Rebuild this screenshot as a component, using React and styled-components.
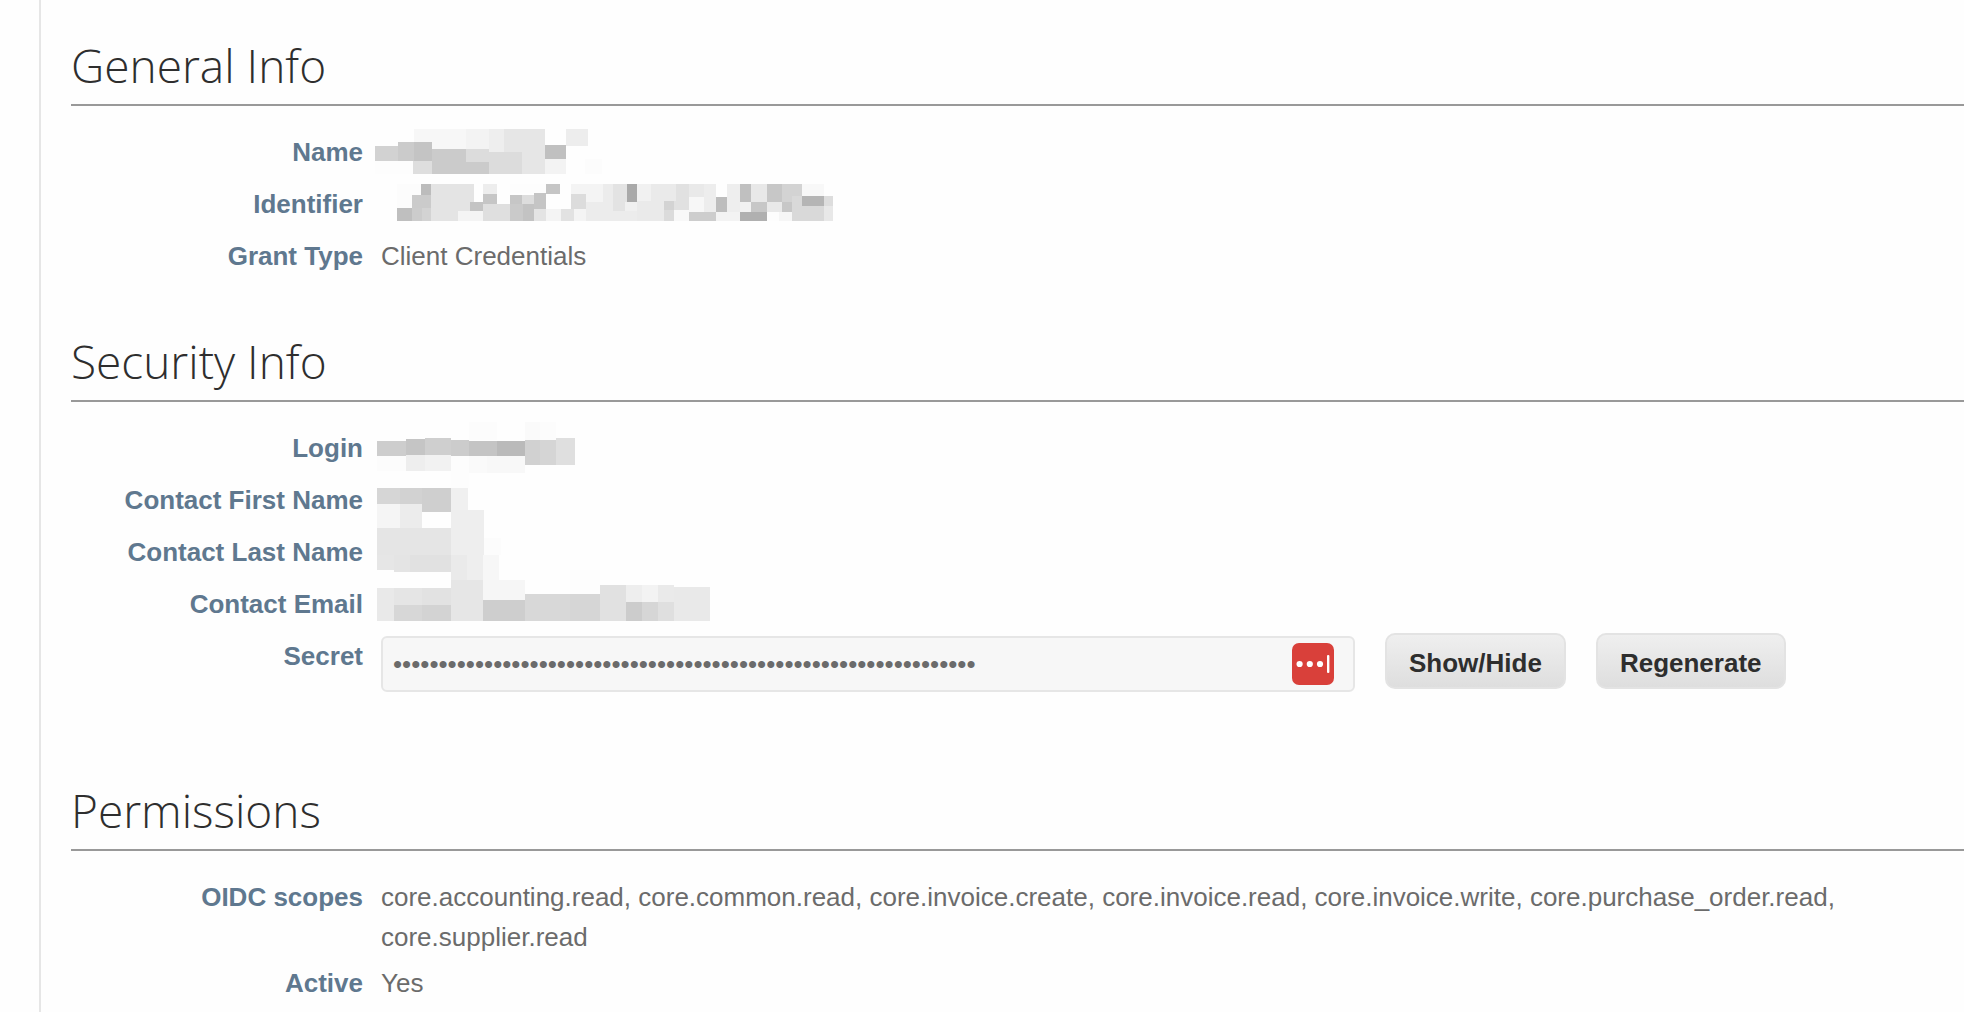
import React, { useState } from 'react';
import styled, { createGlobalStyle } from 'styled-components';

const GlobalStyle = createGlobalStyle`
  body {
    margin: 0;
    background: #fefefe;
    font-family: 'Liberation Sans', Arial, sans-serif;
    font-size: 26px;
    line-height: 40px;
    color: #6b6b6b;
  }
`;

const Page = styled.main`
  box-sizing: border-box;
  min-height: 100vh;
  margin-left: 39px;
  padding: 33px 0 0 30px;
  border-left: 2px solid #e6e6e6;
  overflow: hidden;
`;

const Section = styled.section`
  & + & {
    margin-top: 41px;
  }
`;

const Title = styled.h2`
  margin: 0 0 26px;
  padding-bottom: 7px;
  border-bottom: 2px solid #999;
  font-family: 'Open Sans', sans-serif;
  font-size: 46px;
  font-weight: 300;
  line-height: 64px;
  color: #2e2e2e;
`;

const List = styled.dl`
  margin: 0;
`;

const Row = styled.div`
  display: grid;
  grid-template-columns: 292px 1fr;
  column-gap: 18px;
  padding-bottom: ${({ $last }) => ($last ? '45px' : '6px')};
`;

const Label = styled.dt`
  min-height: 46px;
  font-weight: bold;
  text-align: right;
  color: #5f788f;
`;

const Value = styled.dd`
  margin: 0;
  min-width: 0;
`;

const Mask = styled.svg`
  display: block;
  overflow: visible;
`;

const SecretBar = styled.div`
  display: flex;
  align-items: flex-start;
  gap: 30px;
`;

const SecretBox = styled.div`
  position: relative;
  flex: 0 1 974px;
`;

const SecretInput = styled.input`
  display: block;
  box-sizing: border-box;
  width: 100%;
  height: 56px;
  padding: 0 70px 0 10px;
  border: 2px solid #e6e6e6;
  border-radius: 6px;
  background: #f7f7f7;
  font: inherit;
  color: #6b6b6b;
  outline: none;
`;

const FillButton = styled.button`
  position: absolute;
  top: 7px;
  right: 21px;
  width: 42px;
  height: 42px;
  padding: 0;
  border: 0;
  border-radius: 7px;
  background: #d9403a;
  cursor: pointer;

  svg {
    display: block;
  }
`;

const Button = styled.button`
  flex: none;
  height: 56px;
  margin-top: -3px;
  padding: 4px 22px 0;
  border: 2px solid #e3e3e3;
  border-radius: 10px;
  background: linear-gradient(#efefef, #dedede);
  font: inherit;
  font-weight: bold;
  color: #2e2e2e;
  cursor: pointer;
`;

// x, y, width, height, grey level
const nameBlocks = [
  [33, -3, 52, 20, 'f7'], [85, -3, 23, 20, 'f3'], [108, -3, 15, 23, 'ee'], [123, -3, 41, 45, 'e6'],
  [-6, 14, 23, 15, 'd2'], [17, 10, 16, 19, 'cb'], [33, 10, 18, 19, 'c4'], [-6, 29, 38, 13, 'fd'],
  [32, 29, 19, 13, 'de'], [51, 17, 57, 25, 'cb'], [85, 17, 23, 13, 'dc'], [108, 20, 33, 22, 'dc'],
  [164, 13, 21, 14, 'c0'], [164, 27, 21, 15, 'f3'], [185, -3, 22, 17, 'ed'], [204, 27, 17, 15, 'fc'],
];

const identifierBlocks = [
  [16, 0, 24, 24, 'fc'], [40, 0, 10, 11, 'bc'], [31, 11, 19, 13, 'cb'], [16, 24, 15, 13, 'bf'],
  [31, 24, 10, 13, 'cc'], [41, 24, 9, 13, 'd3'], [50, 0, 43, 27, 'e4'], [50, 27, 27, 10, 'e4'],
  [77, 27, 25, 10, 'f4'], [89, 18, 13, 9, 'c4'], [102, 0, 14, 10, 'ed'], [102, 10, 14, 10, 'c6'],
  [102, 20, 27, 17, 'df'], [129, 0, 36, 9, 'fd'], [129, 11, 12, 9, 'c6'], [141, 11, 12, 9, 'dd'],
  [129, 20, 13, 17, 'ca'], [142, 20, 11, 17, 'c3'], [153, 9, 12, 16, 'c5'], [153, 25, 12, 12, 'e4'],
  [165, 0, 14, 10, 'c5'], [165, 25, 15, 12, 'f4'], [180, 25, 13, 12, 'e2'], [193, 25, 12, 12, 'f4'],
  [190, 0, 32, 18, 'f4'], [190, 10, 15, 15, 'dc'], [205, 18, 34, 19, 'ec'], [222, 0, 10, 18, 'ec'],
  [232, 0, 14, 27, 'e3'], [246, 0, 10, 18, 'a9'], [256, 0, 14, 17, 'f1'], [244, 18, 12, 9, 'f0'],
  [229, 27, 27, 10, 'ec'], [256, 17, 27, 20, 'ea'], [270, 0, 25, 17, 'ea'], [283, 17, 10, 9, 'd3'],
  [283, 26, 10, 11, 'db'], [295, 0, 13, 26, 'e1'], [293, 17, 2, 9, 'e1'], [293, 26, 15, 11, 'f8'],
  [308, 0, 15, 13, 'e9'], [323, 0, 12, 28, 'ed'], [308, 13, 15, 15, 'f7'], [308, 28, 27, 9, 'cd'],
  [335, 13, 11, 15, 'bd'], [335, 28, 24, 9, 'f3'], [346, 0, 13, 28, 'ee'], [359, 0, 11, 18, 'c0'],
  [359, 18, 11, 10, 'f2'], [370, 0, 16, 18, 'e8'], [370, 18, 16, 10, 'c7'], [359, 28, 27, 9, 'b0'],
  [386, 0, 15, 18, 'c7'], [386, 18, 15, 10, 'e9'], [386, 28, 12, 9, 'fd'], [401, 0, 20, 18, 'd3'],
  [401, 18, 10, 10, 'c7'], [398, 28, 13, 9, 'f6'], [411, 12, 32, 25, 'd9'], [421, 0, 22, 12, 'f8'],
  [421, 12, 22, 10, 'b5'], [443, 12, 9, 10, 'dd'], [443, 22, 9, 15, 'e8'],
];

const loginBlocks = [
  [-4, 13, 29, 15, 'cd'], [25, 11, 19, 16, 'c5'], [44, 10, 26, 17, 'cf'], [70, 12, 18, 16, 'cc'],
  [88, 13, 28, 15, 'c4'], [116, 13, 28, 15, 'ba'], [144, 12, 15, 25, 'd1'], [159, 12, 16, 25, 'd5'],
  [175, 10, 19, 27, 'df'], [-4, 28, 29, 15, 'fc'], [25, 27, 19, 16, 'ee'], [44, 27, 26, 16, 'f2'],
  [70, 28, 18, 32, 'fd'], [88, 28, 18, 17, 'fa'], [106, 28, 38, 17, 'f8'], [88, -6, 28, 18, 'fc'],
  [144, -6, 15, 18, 'fa'], [159, -6, 16, 18, 'fc'],
];

const firstNameBlocks = [
  [-4, 8, 23, 16, 'd6'], [19, 8, 22, 16, 'd2'], [41, 8, 29, 24, 'cf'], [70, 8, 17, 22, 'f0'],
  [-4, 24, 23, 24, 'f5'], [19, 24, 22, 24, 'ec'], [70, 30, 33, 45, 'ee'],
];

const lastNameBlocks = [
  [-4, -4, 74, 27, 'e5'], [-4, 23, 17, 15, 'e6'], [13, 23, 16, 17, 'e4'], [29, 23, 41, 17, 'e1'],
  [103, 6, 17, 17, 'fc'], [70, 23, 16, 25, 'ea'], [86, 23, 16, 25, 'ee'], [102, 23, 16, 25, 'f7'],
];

const emailBlocks = [
  [-4, 4, 17, 33, 'e9'], [13, 4, 28, 17, 'e5'], [41, 4, 29, 17, 'e2'], [13, 21, 28, 16, 'd7'],
  [41, 21, 29, 16, 'd3'], [70, -4, 32, 41, 'e6'], [102, -4, 42, 20, 'f6'], [102, 16, 42, 21, 'ce'],
  [144, 10, 45, 27, 'd8'], [189, 10, 30, 27, 'd6'], [189, -14, 30, 24, 'fd'], [219, 1, 26, 36, 'e1'],
  [245, 1, 16, 17, 'ee'], [261, 1, 16, 17, 'f3'], [277, 1, 16, 17, 'ea'], [245, 18, 16, 19, 'cc'],
  [261, 18, 16, 19, 'd6'], [277, 18, 16, 19, 'df'], [293, 3, 36, 34, 'e9'],
];

const Redacted = ({ blocks }) => (
  <Mask width='460' height='40' shapeRendering='crispEdges' aria-hidden='true'>
    {blocks.map(([x, y, w, h, g], i) => (
      <rect key={i} x={x} y={y} width={w} height={h} fill={`#${g}${g}${g}`} />
    ))}
  </Mask>
);

const Field = ({ label, children }) => (
  <Row>
    <Label>{label}</Label>
    <Value>{children}</Value>
  </Row>
);

const SecretField = () => {
  const [visible, setVisible] = useState(false);
  const [secret, setSecret] = useState('0'.repeat(64));

  const regenerate = () => {
    const bytes = crypto.getRandomValues(new Uint8Array(32));
    setSecret(Array.from(bytes, (b) => b.toString(16).padStart(2, '0')).join(''));
  };

  return (
    <Row $last>
      <Label>
        <label htmlFor='secret'>Secret</label>
      </Label>
      <Value>
        <SecretBar>
          <SecretBox>
            <SecretInput id='secret' type={visible ? 'text' : 'password'} value={secret} readOnly />
            <FillButton type='button' aria-label='Password manager'>
              <svg width='42' height='42' viewBox='0 0 42 42' fill='#fff'>
                <circle cx='7.6' cy='21' r='3.1' />
                <circle cx='17.8' cy='21' r='3.1' />
                <circle cx='28' cy='21' r='3.1' />
                <rect x='35' y='12' width='2.4' height='18' rx='1' />
              </svg>
            </FillButton>
          </SecretBox>
          <Button type='button' onClick={() => setVisible(!visible)}>Show/Hide</Button>
          <Button type='button' onClick={regenerate}>Regenerate</Button>
        </SecretBar>
      </Value>
    </Row>
  );
};

const App = () => (
  <>
    <GlobalStyle />
    <Page>
      <Section>
        <Title>General Info</Title>
        <List>
          <Field label='Name'><Redacted blocks={nameBlocks} /></Field>
          <Field label='Identifier'><Redacted blocks={identifierBlocks} /></Field>
          <Field label='Grant Type'>Client Credentials</Field>
        </List>
      </Section>
      <Section>
        <Title>Security Info</Title>
        <List>
          <Field label='Login'><Redacted blocks={loginBlocks} /></Field>
          <Field label='Contact First Name'><Redacted blocks={firstNameBlocks} /></Field>
          <Field label='Contact Last Name'><Redacted blocks={lastNameBlocks} /></Field>
          <Field label='Contact Email'><Redacted blocks={emailBlocks} /></Field>
          <SecretField />
        </List>
      </Section>
      <Section>
        <Title>Permissions</Title>
        <List>
          <Field label='OIDC scopes'>
            core.accounting.read, core.common.read, core.invoice.create, core.invoice.read, core.invoice.write,
            core.purchase_order.read, core.supplier.read
          </Field>
          <Field label='Active'>Yes</Field>
        </List>
      </Section>
    </Page>
  </>
);

export default App;
